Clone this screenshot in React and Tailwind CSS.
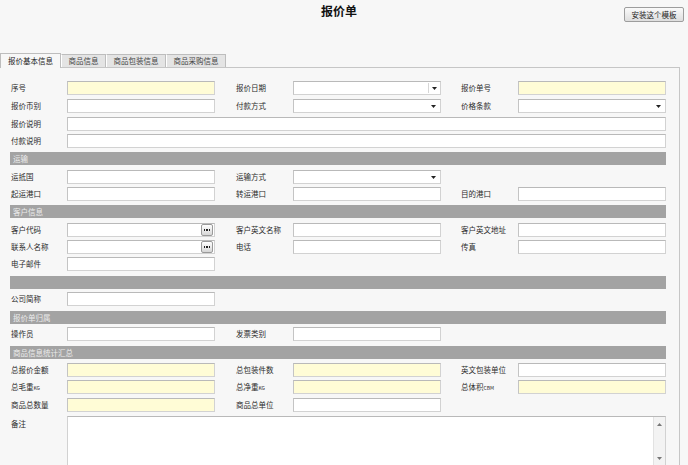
import React from "react";

const H = { 16: "h-[16px]", 17: "h-[17px]", 18: "h-[18px]", 19: "h-[19px]" };

function Arrow() {
  return (
    <svg width="5" height="3" viewBox="0 0 5 3" className="shrink-0">
      <polygon points="0,0 5,0 2.5,3" fill="#222" />
    </svg>
  );
}

function Field({ kind, w = "w-[148px]" }) {
  const bg = kind === "yellow" ? "bg-[#fffcd6]" : "bg-white";
  return (
    <div className={`${w} shrink-0 h-[14px] border border-[#d2d2d2] border-t-[#b9b9b9] border-l-[#c4c4c4] ${bg} flex items-center justify-end`}>
      {kind === "select" && (
        <span className="mr-[4px] flex">
          <Arrow />
        </span>
      )}
      {kind === "date" && (
        <>
          <span className="w-px h-[10px] bg-[#d6d6d6] mr-[3px]" />
          <span className="mr-[3px] flex">
            <Arrow />
          </span>
        </>
      )}
      {kind === "dots" && (
        <span className="mr-px w-[12px] h-[12px] border border-[#9a9a9a] rounded-[2px] bg-gradient-to-b from-white to-[#d6d6d6] flex items-center justify-center gap-px">
          <span className="w-[1.5px] h-[1.5px] bg-[#222]" />
          <span className="w-[1.5px] h-[1.5px] bg-[#222]" />
          <span className="w-[1.5px] h-[1.5px] bg-[#222]" />
        </span>
      )}
    </div>
  );
}

function Label({ text, cls }) {
  const m = text.match(/^(.*?)(KG|CBM)$/);
  return (
    <div className={`${cls} shrink-0 text-[7.5px] leading-[14px] text-[#2a2a2a] whitespace-nowrap`}>
      {m ? (
        <>
          {m[1]}
          <span className="text-[5px]">{m[2]}</span>
        </>
      ) : (
        text
      )}
    </div>
  );
}

const labelCls = ["w-[57px] pl-px", "w-[78px] pl-[21px]", "w-[77px] pl-[20px]"];

const items = [
  { h: 18, cells: [["序号", "yellow"], ["报价日期", "date"], ["报价单号", "yellow"]] },
  { h: 18, cells: [["报价币别", "white"], ["付款方式", "select"], ["价格条款", "select"]] },
  { h: 17, full: "报价说明" },
  { h: 18, full: "付款说明" },
  { h: 18, header: "运输" },
  { h: 17, cells: [["运抵国", "white"], ["运输方式", "select"]] },
  { h: 18, cells: [["起运港口", "white"], ["转运港口", "white"], ["目的港口", "white"]] },
  { h: 18, header: "客户信息" },
  { h: 17, cells: [["客户代码", "dots"], ["客户英文名称", "white"], ["客户英文地址", "white"]] },
  { h: 17, cells: [["联系人名称", "dots"], ["电话", "white"], ["传真", "white"]] },
  { h: 19, cells: [["电子邮件", "white"]] },
  { h: 16, header: "" },
  { h: 19, cells: [["公司简称", "white"]] },
  { h: 16, header: "报价单归属" },
  { h: 19, cells: [["操作员", "white"], ["发票类别", "white"]] },
  { h: 17, header: "商品信息统计汇总" },
  { h: 17, cells: [["总报价金额", "yellow"], ["总包装件数", "yellow"], ["英文包装单位", "white"]] },
  { h: 18, cells: [["总毛重KG", "yellow"], ["总净重KG", "yellow"], ["总体积CBM", "yellow"]] },
  { h: 18, cells: [["商品总数量", "yellow"], ["商品总单位", "white"]] },
];

function Item({ it }) {
  if (it.header !== undefined) {
    return (
      <div className={H[it.h]}>
        <div className="w-[656px] h-[13px] bg-[#a3a3a3] pl-[3px] text-[7.5px] leading-[13px] text-[#ececec]">
          {it.header}
        </div>
      </div>
    );
  }
  if (it.full) {
    return (
      <div className={H[it.h]}>
        <div className="flex items-center h-[14px]">
          <Label text={it.full} cls={labelCls[0]} />
          <Field kind="white" w="w-[599px]" />
        </div>
      </div>
    );
  }
  return (
    <div className={H[it.h]}>
      <div className="flex items-center h-[14px]">
        {it.cells.map(([t, k], i) => (
          <React.Fragment key={i}>
            <Label text={t} cls={labelCls[i]} />
            <Field kind={k} />
          </React.Fragment>
        ))}
      </div>
    </div>
  );
}

export default function App() {
  return (
    <div className="w-[688px] h-[465px] overflow-hidden bg-[#f7f7f7] font-['Noto_Sans_CJK_SC','Noto_Sans',sans-serif]">
      <div className="h-[53px] flex items-start">
        <div className="ml-[321px] mt-[4px] text-[12px] leading-[14px] font-bold text-[#111]">报价单</div>
        <button className="ml-auto mr-[4px] mt-[7px] w-[60px] h-[15px] border border-[#9d9d9d] rounded-[2px] bg-gradient-to-b from-[#fafafa] to-[#dedede] text-[7.5px] leading-[13px] text-[#222]">
          安装这个模板
        </button>
      </div>
      <div className="flex items-end h-[14px]">
        <div className="relative z-10 -mb-px w-[61px] h-[15px] border border-b-0 border-[#bdbdbd] bg-[#f7f7f7] text-center text-[7.5px] leading-[13px] text-[#222]">
          报价基本信息
        </div>
        <div className="w-[45px] h-[13px] border-t border-r border-l border-l-white border-[#bdbdbd] bg-[#e4e4e4] text-center text-[7.5px] leading-[12px] text-[#444]">
          商品信息
        </div>
        <div className="w-[60px] h-[13px] border-t border-r border-l border-l-white border-[#bdbdbd] bg-[#e4e4e4] text-center text-[7.5px] leading-[12px] text-[#444]">
          商品包装信息
        </div>
        <div className="w-[60px] h-[13px] border-t border-r border-l border-l-white border-[#bdbdbd] bg-[#e4e4e4] text-center text-[7.5px] leading-[12px] text-[#444]">
          商品采购信息
        </div>
      </div>
      <div className="w-[680px] h-[420px] border-t border-r border-[#c6c6c6] pl-[10px] pt-[13px]">
        {items.map((it, i) => (
          <Item key={i} it={it} />
        ))}
        <div className="flex items-start">
          <div className="w-[57px] pl-px pt-[1px] text-[7.5px] leading-[14px] text-[#2a2a2a]">备注</div>
          <div className="w-[599px] h-[60px] border border-[#d2d2d2] border-t-[#b9b9b9] bg-white flex justify-end">
            <div className="w-[12px] h-full border-l border-[#e2e2e2] bg-[#f3f3f3] flex flex-col items-center pt-[6px] gap-[31px]">
              <svg width="5" height="3" viewBox="0 0 5 3">
                <polygon points="0,3 5,3 2.5,0" fill="#777" />
              </svg>
              <svg width="5" height="3" viewBox="0 0 5 3">
                <polygon points="0,0 5,0 2.5,3" fill="#777" />
              </svg>
            </div>
          </div>
        </div>
      </div>
    </div>
  );
}
